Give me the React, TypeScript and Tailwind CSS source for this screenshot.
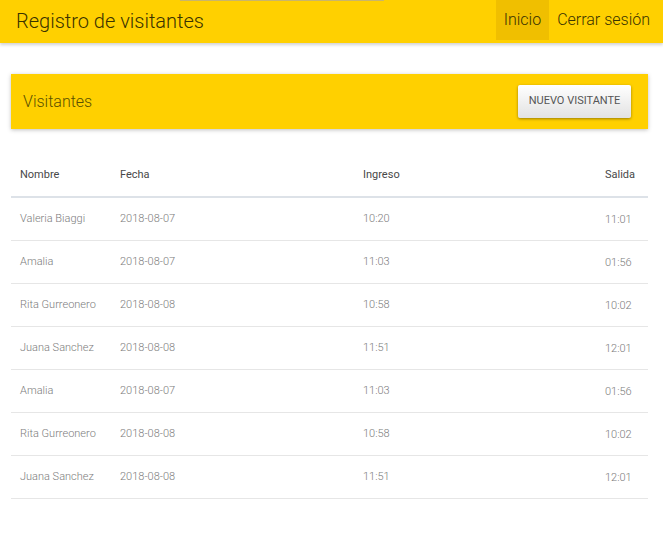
import React from 'react';

const VISITORS = [
  { name: 'Valeria Biaggi', date: '2018-08-07', in: '10:20', out: '11:01' },
  { name: 'Amalia', date: '2018-08-07', in: '11:03', out: '01:56' },
  { name: 'Rita Gurreonero', date: '2018-08-08', in: '10:58', out: '10:02' },
  { name: 'Juana Sanchez', date: '2018-08-08', in: '11:51', out: '12:01' },
  { name: 'Amalia', date: '2018-08-07', in: '11:03', out: '01:56' },
  { name: 'Rita Gurreonero', date: '2018-08-08', in: '10:58', out: '10:02' },
  { name: 'Juana Sanchez', date: '2018-08-08', in: '11:51', out: '12:01' },
];

const cols = 'grid grid-cols-[100px_243px_242px_52px]';

export default function App() {
  return (
    <div className="min-h-[537px] bg-white font-['Roboto',sans-serif]">
      <header className="relative flex h-[43px] items-start justify-between bg-[#ffd000] shadow-[0_2px_3px_rgba(0,0,0,0.18)]">
        <div className="absolute left-[180px] top-0 h-px w-[204px] bg-[#c9b56a]" />
        <h1 className="pl-4 pt-[6px] text-[20px] font-light text-[#3a3300]">Registro de visitantes</h1>
        <nav className="mr-[5px] flex text-[16px] font-light text-[#3a3300]">
          <a className="flex h-[40px] items-center bg-[#f0bf00] px-2">Inicio</a>
          <a className="flex h-[40px] items-center px-2">Cerrar sesión</a>
        </nav>
      </header>

      <main className="w-[659px] px-[11px] pt-[31px]">
        <div className="flex h-[55px] items-center justify-between bg-[#ffd000] pl-3 pr-[17px] shadow-[0_1px_4px_rgba(0,0,0,0.25)]">
          <h2 className="text-[16px] font-light text-[#5a5000]">Visitantes</h2>
          <button className="h-[33px] w-[113px] rounded-[2px] bg-gradient-to-b from-white to-[#e2e2e2] text-[11px] text-[#555] shadow-[0_1px_3px_rgba(0,0,0,0.4)]">
            NUEVO VISITANTE
          </button>
        </div>

        <div className="mt-[25px] text-[11px]">
          <div className={`${cols} h-[44px] items-center border-b-2 border-[#dde2e8] text-[#484848]`}>
            <span className="pl-[9px]">Nombre</span>
            <span className="pl-[9px]">Fecha</span>
            <span className="pl-[9px]">Ingreso</span>
            <span className="pl-[9px]">Salida</span>
          </div>
          {VISITORS.map((v, i) => (
            <div key={i} className={`${cols} h-[43px] items-center border-b border-[#e6e6e6] font-light text-[#7c7c7c]`}>
              <span className="pl-[9px]">{v.name}</span>
              <span className="pl-[9px]">{v.date}</span>
              <span className="pl-[9px]">{v.in}</span>
              <span className="pl-[9px] pt-[2px]">{v.out}</span>
            </div>
          ))}
        </div>
      </main>
    </div>
  );
}
